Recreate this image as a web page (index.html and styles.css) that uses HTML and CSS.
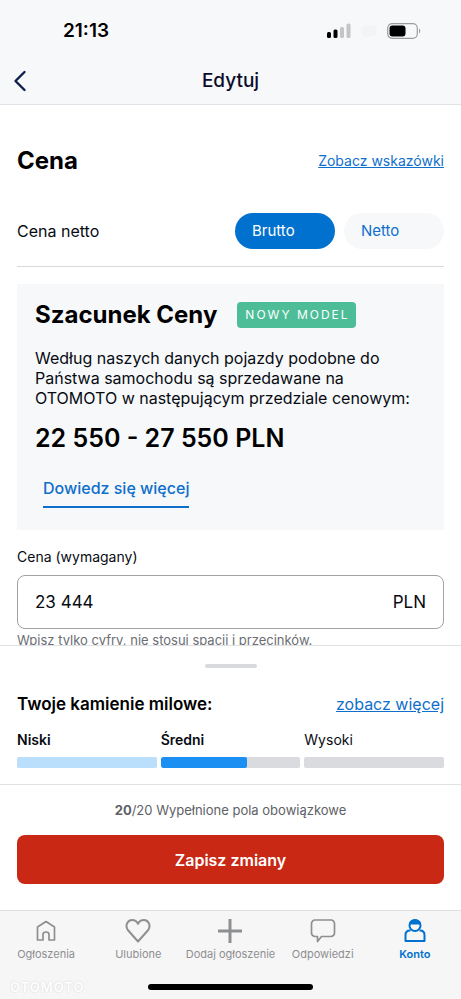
FILE: index.html
```html
<!DOCTYPE html>
<html lang="pl">
<head>
    <meta charset="UTF-8">
    <meta name="viewport" content="width=device-width, initial-scale=1.0">
    <title>Edytuj ogłoszenie</title>
    <link rel="stylesheet" href="styles.css">
</head>
<body>

    <header class="top">
        <div class="status-bar">
            <span class="time">21:13</span>
            <div class="status-icons">
                <svg width="24" height="16" viewBox="0 0 24 16">
                    <rect x="0" y="9" width="4" height="6" rx="1.5" fill="#000"/>
                    <rect x="6.500" y="6.500" width="4" height="8.500" rx="1.500" fill="#000"/>
                    <rect x="13" y="4" width="4" height="11" rx="1.500" fill="#c4c5c7"/>
                    <rect x="19.500" y="0.500" width="4" height="14.500" rx="1.500" fill="#c4c5c7"/>
                </svg>
                <span class="carrier"></span>
                <svg width="34" height="16" viewBox="0 0 34 16">
                    <rect x="0.7" y="0.7" width="29.6" height="14.6" rx="4.5" fill="none" stroke="#9b9c9e" stroke-width="1.2"/>
                    <rect x="2.5" y="2.5" width="16" height="11" rx="3" fill="#000"/>
                    <path d="M32 5.500c1.600.7 1.600 4.300 0 5z" fill="#9b9c9e"/>
                </svg>
            </div>
        </div>
        <div class="title-bar">
            <button class="back" aria-label="Wstecz">
                <svg width="14" height="22" viewBox="0 0 14 22">
                    <path d="M11.5 2 2.5 11l9 9" fill="none" stroke="#0f1f4b" stroke-width="2.4" stroke-linecap="round" stroke-linejoin="round"/>
                </svg>
            </button>
            <h1>Edytuj</h1>
        </div>
    </header>

    <main class="content">
        <div class="row section-head">
            <h2>Cena</h2>
            <a href="#" class="hint-link">Zobacz wskazówki</a>
        </div>

        <div class="row price-type">
            <span>Cena netto</span>
            <div class="toggle">
                <button class="pill active" aria-pressed="true">Brutto</button>
                <button class="pill" aria-pressed="false">Netto</button>
            </div>
        </div>

        <section class="estimate">
            <div class="estimate-head">
                <h2>Szacunek Ceny</h2>
                <span class="badge">NOWY MODEL</span>
            </div>
            <p>Według naszych danych pojazdy podobne do Państwa samochodu są sprzedawane na OTOMOTO w następującym przedziale cenowym:</p>
            <strong class="range">22 550 - 27 550 PLN</strong>
            <a href="#" class="more">Dowiedz się więcej</a>
        </section>

        <div class="field">
            <label for="price">Cena (wymagany)</label>
            <div class="input-box">
                <input type="text" id="price" inputmode="numeric" value="23 444">
                <span>PLN</span>
            </div>
            <small>Wpisz tylko cyfry, nie stosuj spacji i przecinków.</small>
        </div>
    </main>

    <section class="sheet">
        <div class="handle"></div>
        <div class="row sheet-head">
            <h3>Twoje kamienie milowe:</h3>
            <a href="#">zobacz więcej</a>
        </div>
        <div class="milestones">
            <div class="milestone reached">
                <span>Niski</span>
                <div class="bar"><div class="fill light" style="width: 100%"></div></div>
            </div>
            <div class="milestone reached">
                <span>Średni</span>
                <div class="bar"><div class="fill" style="width: 62%"></div></div>
            </div>
            <div class="milestone">
                <span>Wysoki</span>
                <div class="bar"></div>
            </div>
        </div>
    </section>

    <section class="save">
        <p><b>20</b>/20 Wypełnione pola obowiązkowe</p>
        <button class="save-button">Zapisz zmiany</button>
    </section>

    <footer class="bottom">
        <nav class="tabs">
            <a href="#">
                <svg width="26" height="26" viewBox="0 0 26 26">
                    <path d="M4.500 9 13 3.500 21.500 9v13H16v-5.500q0-2.500-3-2.500t-3 2.500V22H4.500z" stroke-width="1.700"/>
                </svg>
                <span>Ogłoszenia</span>
            </a>
            <a href="#">
                <svg width="26" height="26" viewBox="0 0 26 26">
                    <path d="M13 23.500 2.800 12C-.2 7.500 2.500 2 7 2c2.700 0 4.800 1.300 6 3.800C14.200 3.300 16.300 2 19 2c4.500 0 7.200 5.500 4.200 10z"/>
                </svg>
                <span>Ulubione</span>
            </a>
            <a href="#">
                <svg width="26" height="26" viewBox="0 0 26 26">
                    <path d="M13 1v24M1 13h24" stroke-width="3"/>
                </svg>
                <span>Dodaj ogłoszenie</span>
            </a>
            <a href="#">
                <svg width="26" height="26" viewBox="0 0 26 26">
                    <path d="M5 2h16a3.500 3.500 0 0 1 3.500 3.500V15a3.500 3.500 0 0 1-3.500 3.500h-9.500L7.500 23.500v-5H5A3.500 3.500 0 0 1 1.500 15V5.500A3.500 3.500 0 0 1 5 2z" stroke-width="1.700"/>
                </svg>
                <span>Odpowiedzi</span>
            </a>
            <a href="#" class="current">
                <svg width="26" height="26" viewBox="0 0 26 26">
                    <circle cx="13" cy="7.500" r="5.500"/>
                    <path d="M8.500 12.500H8c-3 0-4.500 2-4.500 4.500v6h19v-6c0-2.500-1.500-4.500-4.500-4.500h-.5"/>
                    <path d="M8 5.500C9 1.500 17 1.500 18 5.500z" fill="#0071ce"/>
                </svg>
                <span>Konto</span>
            </a>
        </nav>
        <div class="home-row">
            <span class="watermark">OTOMOTO</span>
            <div class="home-indicator"></div>
        </div>
    </footer>

</body>
</html>
```

FILE: styles.css
```css
/* General */
* {
    box-sizing: border-box;
}

body {
    margin: 0;
    height: 100vh;
    display: flex;
    flex-direction: column;
    background: #fff;
    color: #080b12;
    font-family: Inter, sans-serif;
    font-size: 16px;
    line-height: 20px;
}

h1, h2, h3, p {
    margin: 0;
}

a {
    color: #0f6fcb;
}

button {
    font: inherit;
    border: none;
    cursor: pointer;
}

h2 {
    font-size: 24px;
    line-height: 30px;
    font-weight: 700;
    color: #000;
}

.row {
    display: flex;
    justify-content: space-between;
    align-items: center;
}

/* Header */
.top {
    background: #f6f8fa;
    border-bottom: 1px solid #dfe3e7;
}

.status-bar {
    display: flex;
    justify-content: space-between;
    align-items: center;
    height: 62px;
    padding: 0 40px 0 63px;
}

.time {
    font-size: 19px;
    font-weight: 600;
    color: #000;
}

.status-icons {
    display: flex;
    align-items: center;
    gap: 10px;
}

.carrier {
    width: 16px;
    height: 12px;
    border-radius: 6px;
    background: #f2f4f6;
}

.title-bar {
    display: grid;
    grid-template-columns: 40px 1fr 40px;
    align-items: center;
    height: 42px;
    padding-bottom: 4px;
}

.back {
    display: flex;
    padding: 0 0 0 13px;
    background: none;
}

h1 {
    font-size: 19px;
    font-weight: 500;
    text-align: center;
    color: #0b0b2b;
}

/* Form */
.content {
    flex: 1;
    min-height: 0;
    overflow: hidden;
    padding: 41px 17px 0;
}

.hint-link {
    font-size: 14px;
}

.price-type {
    padding: 37px 0 17px;
    border-bottom: 1px solid #d8dadc;
}

.toggle {
    display: flex;
    gap: 9px;
}

.pill {
    width: 100px;
    height: 36px;
    padding: 0 17px;
    border-radius: 18px;
    background: #f6f8fa;
    color: #0f6fcb;
    font-size: 15px;
    text-align: left;
}

.pill.active {
    background: #0071ce;
    color: #fff;
}

.estimate {
    margin-top: 17px;
    padding: 16px 18px 22px;
    background: #f6f8fa;
}

.estimate-head {
    display: flex;
    align-items: center;
    gap: 20px;
}

.badge {
    padding: 3px 6px 3px 8px;
    border-radius: 4px;
    background: #4dbd98;
    color: #fff;
    font-size: 12px;
    letter-spacing: 2px;
}

.estimate p {
    margin: 18px 0 15px;
}

.range {
    display: block;
    font-size: 25px;
    line-height: 30px;
    font-weight: 600;
    color: #000;
}

.more {
    display: inline-block;
    margin: 25px 8px 0;
    padding-bottom: 8px;
    border-bottom: 2px solid #0f6fcb;
    font-weight: 500;
    text-decoration: none;
}

.field {
    display: flex;
    flex-direction: column;
    padding-top: 17px;
}

.field label {
    font-size: 14px;
}

.input-box {
    display: flex;
    align-items: center;
    height: 54px;
    margin: 8px 0 1px;
    padding: 0 17px;
    border: 1px solid #a0a2a6;
    border-radius: 8px;
    font-size: 17px;
}

.input-box input {
    flex: 1;
    min-width: 0;
    padding: 0;
    border: none;
    outline: none;
    background: none;
    color: inherit;
    font: inherit;
}

.field small {
    font-size: 13px;
    color: #6b6e73;
}

/* Milestones */
.sheet {
    padding: 18px 17px 16px;
    background: #fff;
    border-top: 1px solid #dfe1e4;
    border-bottom: 1px solid #dfe1e4;
}

.handle {
    width: 52px;
    height: 4px;
    margin: 0 auto 26px;
    border-radius: 2px;
    background: #d9dadd;
}

h3 {
    font-size: 17px;
    font-weight: 600;
    color: #000;
}

.milestones {
    display: grid;
    grid-template-columns: repeat(3, 1fr);
    gap: 4px;
    margin-top: 16px;
    font-size: 14px;
}

.reached {
    font-weight: 600;
}

.bar {
    height: 11px;
    margin-top: 7px;
    border-radius: 2px;
    background: #d9dbde;
    overflow: hidden;
}

.fill {
    height: 100%;
    border-radius: 2px;
    background: #1c8ff2;
}

.fill.light {
    background: #b9dffd;
}

/* Save */
.save {
    padding: 15px 17px 26px;
    text-align: center;
}

.save p {
    font-size: 13px;
    color: #5e6166;
}

.save-button {
    width: 100%;
    height: 49px;
    margin-top: 15px;
    border-radius: 8px;
    background: #c82814;
    color: #fff;
    font-weight: 600;
}

/* Bottom navigation */
.bottom {
    background: #f6f6f7;
    border-top: 1px solid #dededf;
}

.tabs {
    display: grid;
    grid-template-columns: repeat(5, 1fr);
    padding-top: 7px;
}

.tabs a {
    display: flex;
    flex-direction: column;
    align-items: center;
    color: #8e8f91;
    font-size: 11px;
    text-decoration: none;
    white-space: nowrap;
}

.tabs svg {
    fill: none;
    stroke: currentColor;
    stroke-width: 2;
    stroke-linejoin: round;
}

.tabs .current {
    color: #0071ce;
    font-weight: 600;
}

.home-row {
    display: grid;
    grid-template-columns: 1fr 165px 1fr;
    align-items: center;
    height: 35px;
    padding-top: 11px;
}

.watermark {
    padding-left: 10px;
    color: #fff;
    font-size: 13px;
    font-weight: 600;
    letter-spacing: 1px;
    text-shadow: 0 0 2px #d0d0d0;
}

.home-indicator {
    height: 6px;
    border-radius: 3px;
    background: #000;
}
```
